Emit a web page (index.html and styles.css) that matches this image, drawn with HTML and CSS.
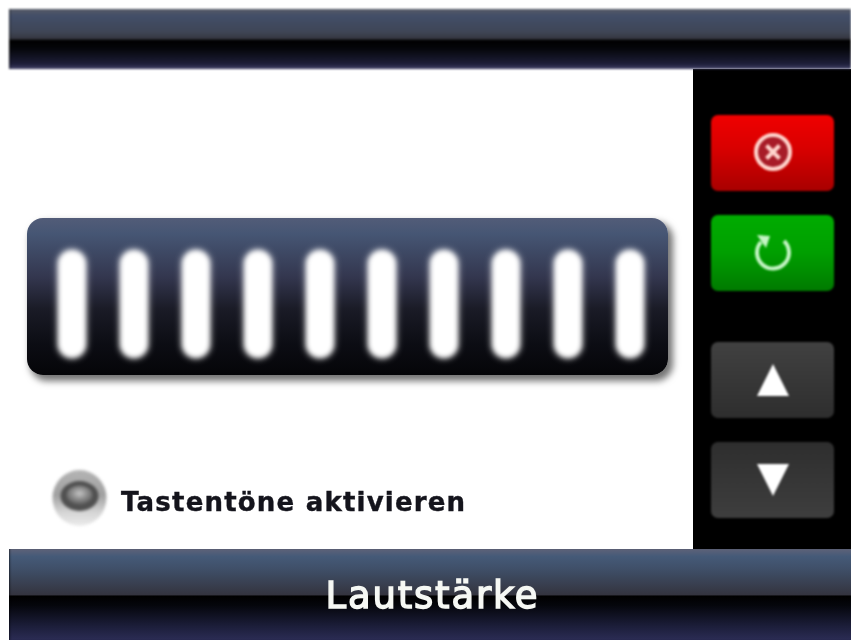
FILE: index.html
```html
<!DOCTYPE html>
<html lang="de">
<head>
<meta charset="utf-8">
<title>Lautstärke</title>
<link rel="stylesheet" href="styles.css">
</head>
<body>
<div class="screen">
  <header class="band band-top"></header>
  <main class="main">
    <section class="content">
      <div class="volume">
        <span class="tick"></span><span class="tick"></span><span class="tick"></span><span class="tick"></span><span class="tick"></span>
        <span class="tick"></span><span class="tick"></span><span class="tick"></span><span class="tick"></span><span class="tick"></span>
      </div>
      <div class="sound">
        <svg class="speaker" viewBox="0 0 58 58" aria-hidden="true">
          <defs>
            <linearGradient id="rim" x1="0" y1="0" x2="0" y2="1">
              <stop offset="0" stop-color="#b4b4b4"/>
              <stop offset="0.45" stop-color="#a0a0a0"/>
              <stop offset="0.75" stop-color="#d4d4d4"/>
              <stop offset="1" stop-color="#ececec"/>
            </linearGradient>
            <radialGradient id="cone" cx="50%" cy="42%" r="55%">
              <stop offset="0" stop-color="#c4c4c4"/>
              <stop offset="0.55" stop-color="#8c8c8c"/>
              <stop offset="1" stop-color="#626262"/>
            </radialGradient>
          </defs>
          <ellipse cx="27.500" cy="29" rx="27" ry="28" fill="url(#rim)"/>
          <ellipse cx="27.500" cy="27" rx="19" ry="15" fill="#505050"/>
          <ellipse cx="27.500" cy="26" rx="13" ry="9.500" fill="url(#cone)"/>
        </svg>
        <span class="sound-label">Tastentöne aktivieren</span>
      </div>
    </section>
    <aside class="side">
      <button class="btn btn-red" type="button" aria-label="Abbrechen">
        <svg class="icon" viewBox="0 0 40 40" aria-hidden="true">
          <circle cx="20" cy="19" r="17" fill="#a81c28" stroke="#ffd4cc" stroke-width="4"/>
          <path d="M13.500 12.500 26.500 25.500M26.500 12.500 13.500 25.500" fill="none" stroke="#ffd4cc" stroke-width="4"/>
        </svg>
      </button>
      <button class="btn btn-green" type="button" aria-label="Zurücksetzen">
        <svg class="icon" viewBox="0 0 40 40" aria-hidden="true">
          <path d="M31 8A16 16 0 1 1 8 9" fill="none" stroke="#c4f5c4" stroke-width="4"/>
          <path d="M4 2 17 3 13 15Z" fill="#c4f5c4"/>
        </svg>
      </button>
      <button class="btn btn-up" type="button" aria-label="Hoch">
        <svg class="arrow" viewBox="0 0 34 36" aria-hidden="true"><path d="M17 2 33 34H1Z" fill="#fff"/></svg>
      </button>
      <button class="btn btn-down" type="button" aria-label="Runter">
        <svg class="arrow" viewBox="0 0 34 36" aria-hidden="true"><path d="M1 2H33L17 34Z" fill="#fff"/></svg>
      </button>
    </aside>
  </main>
  <footer class="band band-bottom"><span class="title">Lautstärke</span></footer>
</div>
</body>
</html>
```

FILE: styles.css
```css
* { box-sizing: border-box; }

html, body {
  margin: 0;
  height: 100%;
  background: #fff;
  overflow: hidden;
}

.screen {
  width: 851px;
  height: 640px;
  padding: 9px 0 0 9px;
  display: flex;
  flex-direction: column;
  font-family: "DejaVu Sans", sans-serif;
}

.band {
  background: linear-gradient(to bottom,
    #565a66 0, #424e68 12%, #3f4656 38%, #35363f 50%,
    #000 52%, #05060a 66%, #1e1f3a 92%, #45456a 100%);
  box-shadow: inset 2px 0 2px -1px rgba(0,0,0,.5);
}

.band-top {
  height: 60px;
  flex: none;
  filter: blur(.8px);
}

.band-bottom {
  height: 91px;
  flex: none;
  display: flex;
  justify-content: center;
  background: linear-gradient(to bottom,
    #5e6278 0, #455a78 8%, #3f4f68 22%, #34343f 50%,
    #000 52%, #05060c 62%, #1c1e3a 85%, #2b2c54 100%);
}

.title {
  margin: 25px 0 0 5px;
  color: #f6f8f4;
  font-size: 37px;
  line-height: 44px;
  font-weight: 400;
  letter-spacing: 1.8px;
  -webkit-text-stroke: 1.4px #f6f8f4;
  filter: blur(.6px);
}

.main {
  flex: 1;
  display: flex;
  min-height: 0;
}

.content {
  flex: 1;
  padding: 149px 0 0 18px;
  min-width: 0;
}

.volume {
  width: 641px;
  height: 157px;
  padding: 32px 24px 17px 31px;
  display: flex;
  justify-content: space-between;
  border-radius: 16px;
  background: linear-gradient(to bottom,
    #525c78 0, #465674 10%, #33364e 38%, #1a1b26 58%, #0c0d14 80%, #050508 100%);
  box-shadow: 4px 5px 7px 1px rgba(0,0,0,.55);
}

.tick {
  width: 28px;
  height: 108px;
  border-radius: 14px;
  background: #fff;
  box-shadow: 0 0 5px 1px rgba(255,255,255,.55);
  filter: blur(2.5px);
}

.sound {
  margin: 94px 0 0 25px;
  display: flex;
  align-items: center;
  gap: 11px;
}

.speaker {
  width: 58px;
  height: 58px;
  flex: none;
  filter: blur(1.5px);
}

.sound-label {
  margin-top: 8px;
  font-size: 26px;
  font-weight: 700;
  line-height: 32px;
  letter-spacing: 1.2px;
  color: #14141c;
  -webkit-text-stroke: .4px #14141c;
  filter: blur(.6px);
}

.side {
  width: 158px;
  flex: none;
  background: #000;
  padding: 46px 0 0 18px;
  display: flex;
  flex-direction: column;
  gap: 24px;
}

.btn {
  width: 123px;
  height: 76px;
  padding: 0;
  border: 0;
  border-radius: 7px;
  display: flex;
  align-items: center;
  justify-content: center;
  filter: blur(.8px);
}

.btn-red {
  background: linear-gradient(to bottom, #f00000 0, #d80000 45%, #a80000 100%);
}

.btn-green {
  background: linear-gradient(to bottom, #00ac00 0, #009f00 50%, #007a00 100%);
}

.btn-up {
  margin-top: 27px;
  background: linear-gradient(to bottom, #414141 0, #2e2e2e 100%);
}

.btn-down {
  background: linear-gradient(to bottom, #2e2e2e 0, #3e3e3e 100%);
}

.icon {
  width: 40px;
  height: 40px;
}

.arrow {
  width: 34px;
  height: 36px;
}
```
